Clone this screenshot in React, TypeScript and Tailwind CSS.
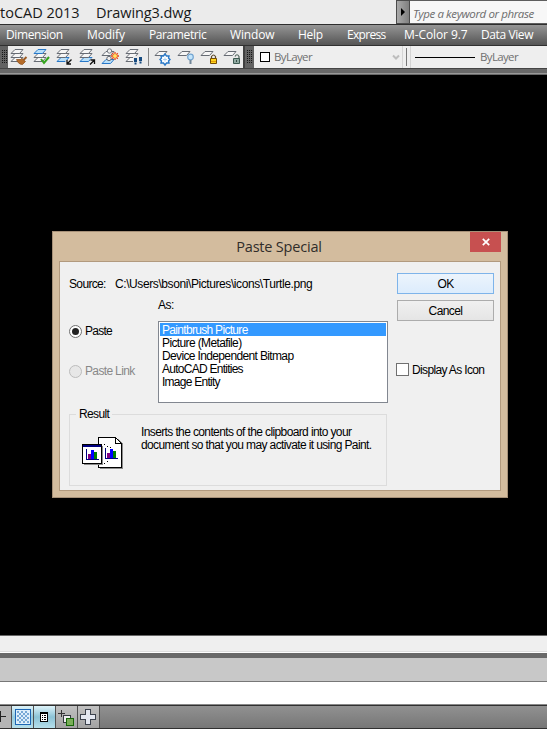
import React from "react";

const ui = "font-['Open_Sans','Noto_Sans',sans-serif]";

const menus: [string, string][] = [
  ["Dimension", "ml-[6px] w-[81px] tracking-[-0.4px]"],
  ["Modify", "w-[62px] tracking-[-0.1px]"],
  ["Parametric", "w-[81px] tracking-[-0.4px]"],
  ["Window", "w-[68px] tracking-[-0.15px]"],
  ["Help", "w-[49px] tracking-[-0.3px]"],
  ["Express", "w-[57px] tracking-[-0.7px]"],
  ["M-Color 9.7", "w-[77px] tracking-[-0.1px]"],
  ["Data View", "w-[66px] tracking-[-0.4px]"],
];

function Sheet({ x, y, on = false }: { x: number; y: number; on?: boolean }) {
  return (
    <path
      d={`M${x + 4} ${y}h8l-3.500 4h-8.500z`}
      fill={on ? "#b9e0fa" : "#f6f6f6"}
      stroke={on ? "#2878c8" : "#676c74"}
      strokeWidth="1"
    />
  );
}

function Stack({ on }: { on: number }) {
  return (
    <g>
      <Sheet x={1} y={10.5} on={on === 2} />
      <Sheet x={1} y={6.5} />
      <Sheet x={1} y={2.5} on={on === 0} />
    </g>
  );
}

type Kind = "brush" | "check" | "in" | "out" | "burst" | "walk" | "freeze" | "bulb" | "lock" | "unlock";

function LayerIcon({ kind }: { kind: Kind }) {
  return (
    <svg viewBox="0 0 18 18" className="h-[18px] w-[18px] shrink-0 overflow-visible">
      {kind === "brush" && (
        <g>
          <Stack on={-1} />
          <path d="M16.500 10l-3 3" stroke="#9b5a22" strokeWidth="2" />
          <path d="M6.500 12.500h4l1-1 4 3-3 3c-3 0-5-2-6-5z" fill="#b66c29" stroke="#864a18" strokeWidth=".7" />
        </g>
      )}
      {kind === "check" && (
        <g>
          <Stack on={0} />
          <path d="M8 12l3 4 5-6" fill="none" stroke="#35a51d" strokeWidth="2" />
        </g>
      )}
      {kind === "in" && (
        <g>
          <Stack on={2} />
          <path d="M15.500 12.500l-4 4M11 13v4h4" fill="none" stroke="#ebebeb" strokeWidth="3" />
          <path d="M15.500 12.500l-4 4M11 13v4h4" fill="none" stroke="#111" strokeWidth="1.3" />
        </g>
      )}
      {kind === "out" && (
        <g>
          <Stack on={2} />
          <path d="M11 17.500l4-4M11.500 13h4v4" fill="none" stroke="#ebebeb" strokeWidth="3" />
          <path d="M11 17.500l4-4M11.500 13h4v4" fill="none" stroke="#111" strokeWidth="1.3" />
        </g>
      )}
      {kind === "burst" && (
        <g>
          <Sheet x={0} y={12.5} on />
          <Sheet x={0} y={4.5} />
          <circle cx="7.500" cy="4" r="2.200" fill="#eee" stroke="#777c84" />
          <circle cx="7" cy="11.500" r="2.200" fill="#eee" stroke="#676c74" />
          <path d="M13 5v8M9 9h8M10.200 6.200l5.600 5.600M15.800 6.200l-5.600 5.600" stroke="#e84713" strokeWidth="1.3" />
          <circle cx="13" cy="9" r="2" fill="#ffe365" />
        </g>
      )}
      {kind === "walk" && (
        <g>
          <Stack on={-1} />
          <path d="M8 9h10v9H8z" fill="#ebebeb" />
          <path d="M9 11h3v4H9zM14 10h3v4h-3zM9.500 15.500h2v2h-2zM14.500 14.500h2v2h-2z" fill="#174b80" />
        </g>
      )}
      {kind === "freeze" && (
        <g>
          <Sheet x={1} y={4.5} />
          <path d="M11 7l1.500 2h2.500l-.5 2L16 12.500 14.500 14l.5 2h-2.500L11 18l-1.500-2H7l.5-2L6 12.500 7.500 11 7 9h2.500z" fill="#fff" stroke="#2878c8" strokeWidth="1.4" />
          <path d="M9 12.500h4M11 10.500v4" stroke="#9ac7ed" strokeWidth=".8" />
        </g>
      )}
      {kind === "bulb" && (
        <g>
          <Sheet x={1} y={4.5} />
          <circle cx="13.500" cy="10" r="2.800" fill="#c3e5fb" stroke="#73a5d1" strokeWidth="1.2" />
          <path d="M12.500 13h2v4h-2z" fill="#718698" />
        </g>
      )}
      {kind === "lock" && (
        <g>
          <Sheet x={1} y={4.5} />
          <path d="M11.500 12V9.500q2-3 4 0V12" fill="none" stroke="#5c492a" strokeWidth="1.2" />
          <path d="M10.500 11.500h6v5h-6z" fill="#ffd51c" stroke="#754c05" />
          <path d="M11 14.500h5" stroke="#e49c08" />
        </g>
      )}
      {kind === "unlock" && (
        <g>
          <Sheet x={1} y={4.5} />
          <path d="M12 9.500q2-3.500 4 0V12" fill="none" stroke="#50645d" strokeWidth="1.2" />
          <path d="M10.500 11.500h6v5h-6z" fill="#91aaa2" stroke="#3d5a51" />
          <path d="M13 13h1v2h-1z" fill="#354b45" />
        </g>
      )}
    </svg>
  );
}

function Grip() {
  return (
    <svg className="h-[14px] w-[5px] shrink-0" viewBox="0 0 5 14" shapeRendering="crispEdges">
      {[0, 2, 4, 6, 8, 10, 12].map((y) => (
        <path key={y} d={`M0 ${y}h1v1H0zM2 ${y}h1v1H2zM4 ${y}h1v1H4z`} fill="#171717" />
      ))}
    </svg>
  );
}

function Toolbar() {
  const first: Kind[] = ["brush", "check", "in", "out", "burst", "walk"];
  const second: Kind[] = ["freeze", "bulb", "lock", "unlock"];
  return (
    <div className="flex h-[22px] shrink-0 bg-[#4b4b4b]">
      <div className="flex w-[8px] items-center bg-[#626262] pl-[2px]"><Grip /></div>
      <div className="flex w-[235px] items-start gap-[5px] bg-[#ebebeb] pl-[2px] pt-px">
        {first.map((k) => <LayerIcon key={k} kind={k} />)}
        <div className="mt-px h-[18px] w-px shrink-0 bg-[#858585]" />
        {second.map((k) => <LayerIcon key={k} kind={k} />)}
      </div>
      <div className="flex w-[11px] items-center justify-center border-l-2 border-[#404040] bg-[#626262]"><Grip /></div>
      <div className="flex flex-1 items-center bg-[#eeeeee] text-[#707070]">
        <div className="flex h-full w-[149px] items-center border-r border-[#d4d4d4] pl-[6px]">
          <div className="h-[10px] w-[10px] border border-black bg-white" />
          <span className={`${ui} ml-[4px] text-[11.500px] tracking-[-0.65px]`}>ByLayer</span>
          <svg className="ml-auto mr-[2px] h-[7px] w-[8px]" viewBox="0 0 8 7"><path d="M1 1.500l3 3 3-3" fill="none" stroke="#bdbdbd" strokeWidth="2" /></svg>
        </div>
        <div className="ml-[3px] h-[18px] w-px bg-[#777]" />
        <div className="ml-[3px] flex h-full flex-1 items-center border-l border-[#d4d4d4] pl-[4px]">
          <div className="h-px w-[60px] bg-black" />
          <span className={`${ui} ml-[5px] text-[11.500px] tracking-[-0.65px]`}>ByLayer</span>
        </div>
      </div>
    </div>
  );
}

function ClipboardIcon() {
  return (
    <svg className="h-[33px] w-[42px]" viewBox="0 0 42 33" shapeRendering="crispEdges">
      <path d="M18 2h18l5 5v25H18z" fill="#8b8b8b" />
      <path d="M16.500.5h17l6 6v24h-23z" fill="white" stroke="black" />
      <path d="M33.500.5v6h6" fill="none" stroke="black" />
      <path d="M2 9h19v19H2z" fill="#8b8b8b" />
      <path d="M.5 7.500h19v19H.5z" fill="white" stroke="black" />
      <path d="M1 8h18v2H1z" fill="#000080" />
      {[0, 19].map((x) => {
        const y = x ? -1 : 0;
        return (
          <g key={x}>
            <path d={`M${x + 4} ${y + 12}h1v10h12v1H${x + 4}z`} fill="#000080" />
            <path d={`M${x + 6} ${y + 17}h3v5h-3z`} fill="#800080" />
            <path d={`M${x + 9} ${y + 13}h3v9h-3z`} fill="blue" />
            <path d={`M${x + 12} ${y + 15}h3v7h-3z`} fill="green" />
          </g>
        );
      })}
      <path d="M22 7h1v1h-1zM25 9h1v1h-1zM28 10h1v1h-1zM22 26h1v1h-1zM25 24h1v1h-1z" fill="black" />
    </svg>
  );
}

function Dialog() {
  const rows: [string, string][] = [
    ["Paintbrush Picture", "tracking-[-0.69px]"],
    ["Picture (Metafile)", "tracking-[-0.62px]"],
    ["Device Independent Bitmap", "tracking-[-0.64px]"],
    ["AutoCAD Entities", "tracking-[-0.74px]"],
    ["Image Entity", "tracking-[-0.74px]"],
  ];
  return (
    <div className="absolute left-[52px] top-[231px] flex h-[267px] w-[456px] flex-col border border-[#a69078] bg-[#d3bc9e] px-[6px] pb-[6px]">
      <div className="flex h-[29px] shrink-0 items-start justify-end">
        <div className={`${ui} flex-1 pl-[29px] pt-[5px] text-center text-[14.500px] leading-[20px] tracking-[-0.2px] text-[#302d2a]`}>Paste Special</div>
        <div className="flex h-[20px] w-[31px] items-center justify-center bg-[#c75050]">
          <svg className="h-[8px] w-[8px]" viewBox="0 0 8 8"><path d="M.8.8l6.400 6.400M7.200.8L.8 7.200" stroke="white" strokeWidth="1.700" /></svg>
        </div>
      </div>
      <div className="flex flex-1 border border-[#b29a7e] bg-[#f0f0f0] pl-[9px] font-['Liberation_Sans',sans-serif] text-[12px] leading-[13px] text-black">
        <div className="flex w-[319px] shrink-0 flex-col">
          <div className="mt-[16px] flex h-[13px] whitespace-nowrap">
            <span className="w-[46px] tracking-[-0.65px]">Source:</span>
            <span className="tracking-[-0.41px]">C:\Users\bsoni\Pictures\icons\Turtle.png</span>
          </div>
          <div className="mt-[8px] flex h-[105px]">
            <div className="flex w-[89px] flex-col pt-[25px]">
              <div className="flex h-[14px] items-center">
                <span className="flex h-[13px] w-[13px] items-center justify-center rounded-full border border-[#707070] bg-white"><span className="h-[7px] w-[7px] rounded-full bg-[#222]" /></span>
                <span className="ml-[3px] tracking-[-0.75px]">Paste</span>
              </div>
              <div className="mt-[26px] flex h-[14px] items-center text-[#888]">
                <span className="h-[13px] w-[13px] rounded-full border border-[#bcbcbc] bg-[#e7e7e7]" />
                <span className="ml-[3px] tracking-[-0.65px]">Paste Link</span>
              </div>
            </div>
            <div className="flex w-[230px] flex-col">
              <div className="h-[22px] tracking-[-0.5px]">As:</div>
              <div className="h-[82px] border border-[#828790] bg-white p-[1px]">
                {rows.map(([row, cls], i) => (
                  <div key={row} className={`${cls} h-[13px] pl-[2px] leading-[14px] ${i === 0 ? "bg-[#3399ff] text-white" : ""}`}>{row}</div>
                ))}
              </div>
            </div>
          </div>
          <fieldset className="mt-[4px] flex h-[78px] w-[318px] min-w-0 border border-[#dcdcdc] px-[12px]">
            <legend className="ml-[-6px] px-[3px] tracking-[-0.65px]">Result</legend>
            <div className="mt-[16px]"><ClipboardIcon /></div>
            <div className="ml-[17px] mt-[5px] whitespace-nowrap tracking-[-0.62px]">Inserts the contents of the clipboard into your<br />document so that you may activate it using Paint.</div>
          </fieldset>
        </div>
        <div className="ml-[9px] flex w-[98px] shrink-0 flex-col pt-[11px]">
          <button className="h-[21px] w-[97px] border border-[#7eb4ea] bg-linear-to-b from-[#ecf4fc] to-[#dcecfc] pt-px tracking-[-0.6px]">OK</button>
          <button className="mt-[6px] h-[21px] w-[97px] border border-[#acacac] bg-linear-to-b from-[#f0f0f0] to-[#e5e5e5] pt-px tracking-[-0.6px]">Cancel</button>
          <label className="ml-[-1px] mt-[42px] flex h-[13px] items-center whitespace-nowrap">
            <span className="mr-[3px] h-[13px] w-[13px] shrink-0 border border-[#707070] bg-white" />
            <span className="pt-px tracking-[-0.65px]">Display As Icon</span>
          </label>
        </div>
      </div>
    </div>
  );
}

function StatusBar() {
  return (
    <div className="flex h-[24px] shrink-0 border-y border-[#303030] bg-linear-to-b from-[#919191] to-[#777]">
      <div className="w-[12px] border-r border-[#505050] bg-[#b5b5b5]"><svg className="h-[22px] w-[11px]" viewBox="0 0 11 22"><path d="M0 10.500h6M.5 5v11" stroke="#222" /></svg></div>
      <div className="flex w-[22px] items-center justify-center border-r border-[#505050] bg-linear-to-b from-[#def4fa] via-[#94cadd] to-[#b6dfeb]">
        <svg className="h-[16px] w-[16px]" viewBox="0 0 16 16" shapeRendering="crispEdges">
          <path d="M.5.5h15v15H.5z" fill="#deeffa" stroke="#1c66b4" />
          {[0, 1, 2, 3, 4, 5].map((r) => [0, 1, 2].map((c) => (
            <path key={`${r}-${c}`} d={`M${2 + c * 4 + (r % 2) * 2} ${2 + r * 2}h2v2h-2z`} fill="#77a9d6" />
          )))}
        </svg>
      </div>
      <div className="flex w-[22px] items-center justify-center border-r border-[#505050] bg-linear-to-b from-[#def4fa] via-[#8cc3d6] to-[#b6dfeb] pr-px">
        <svg className="h-[10px] w-[8px]" viewBox="0 0 8 10" shapeRendering="crispEdges"><path d="M.5.5h7v9h-7z" fill="white" stroke="black" /><path d="M0 0h8v2H0zM2 3h1v1H2zM4 3h2v1H4zM2 5h1v1H2zM4 5h2v1H4zM2 7h1v1H2zM4 7h2v1H4z" /></svg>
      </div>
      <div className="flex w-[22px] items-center justify-center border-r border-[#505050] bg-linear-to-b from-[#c1c1c1] to-[#a2a2a2]">
        <svg className="mr-px h-[17px] w-[18px]" viewBox="0 0 18 17" shapeRendering="crispEdges"><path d="M1 4.500h7M4.500 1v7" stroke="#333" /><path d="M6.500 6.500h7v7h-7z" fill="#eee" stroke="#363941" /><path d="M9.500 9.500h7v7h-7z" fill="#79ae58" stroke="#166608" /></svg>
      </div>
      <div className="flex w-[22px] items-center justify-center border-r border-[#505050] bg-linear-to-b from-[#c1c1c1] to-[#a2a2a2] pr-px">
        <svg className="h-[16px] w-[16px]" viewBox="0 0 16 16" shapeRendering="crispEdges"><path d="M5.500.5h5v5h5v5h-5v5h-5v-5h-5v-5h5z" fill="#e4e8f1" stroke="#3c424d" /></svg>
      </div>
    </div>
  );
}

export default function App() {
  return (
    <div className="relative flex h-[729px] w-[547px] flex-col overflow-hidden bg-black">
      <div className="flex h-[24px] shrink-0 bg-[#ebebeb]">
        <div className={`${ui} flex w-[396px] whitespace-nowrap pt-[3px] text-[14.500px] leading-[20px] text-[#181818]`}>
          <span className="w-[96px]">toCAD 2013</span><span className="tracking-[-0.08px]">Drawing3.dwg</span>
        </div>
        <div className="flex w-[14px] items-center justify-center border border-[#4b4b4b] bg-linear-to-r from-[#aaa] to-[#808080]"><svg className="h-[8px] w-[4px]" viewBox="0 0 4 8"><path d="M0 0l4 4-4 4z" /></svg></div>
        <div className={`${ui} flex-1 whitespace-nowrap border-y border-[#5e5e5e] bg-[#f7f7f7] pl-[3px] pt-[5px] text-[11.500px] italic leading-[16px] tracking-[-0.4px] text-[#6c6c6c]`}>Type a keyword or phrase</div>
      </div>
      <div className={`${ui} flex h-[21px] shrink-0 items-center border-t border-[#2e2e2e] bg-linear-to-b from-[#969696] to-[#555] text-[12px] text-white`}>
        {menus.map(([label, cls]) => <span key={label} className={`${cls} shrink-0 whitespace-nowrap`}>{label}</span>)}
      </div>
      <div className="h-px shrink-0 bg-[#303030]" />
      <Toolbar />
      <div className="h-[7px] shrink-0 border-t border-[#444] bg-[#696969]"><div className="mt-[4px] h-px bg-[#999]" /></div>
      <div className="h-[560px] shrink-0 bg-black" />
      <div className="h-[18px] shrink-0 border-t border-[#666] bg-[#efefef] pt-[15px]"><div className="h-px bg-[#ddd]" /><div className="h-px bg-white" /></div>
      <div className="h-[5px] shrink-0 bg-[#696969]" />
      <div className="h-[24px] shrink-0 border-b border-[#777] bg-[#c8c8c8]" />
      <div className="h-[22px] shrink-0 bg-white" />
      <div className="h-px shrink-0 bg-[#888]" />
      <StatusBar />
      <Dialog />
    </div>
  );
}
